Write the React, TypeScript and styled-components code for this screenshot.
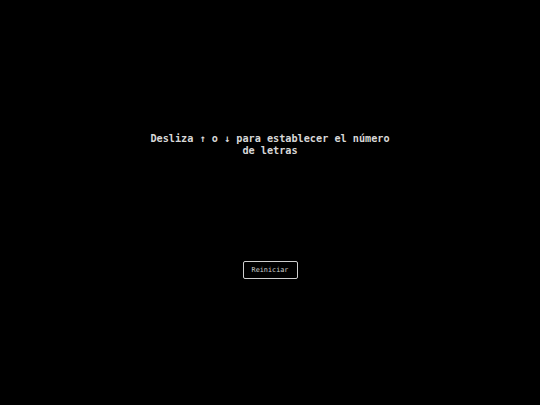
import styled, { createGlobalStyle } from 'styled-components'

const GlobalStyle = createGlobalStyle`
  html, body {
    margin: 0;
    padding: 0;
    background: #000;
  }
`

const Screen = styled.div`
  display: flex;
  flex-direction: column;
  align-items: center;
  height: 100vh;
  background: #000;
  font-family: 'DejaVu Sans Mono', 'Liberation Mono', monospace;
`

const Prompt = styled.div`
  margin-top: 133px;
  width: 252px;
  color: #d8d8d8;
  font-size: 10.2px;
  font-weight: bold;
  line-height: 12px;
  text-align: center;
`

const ResetButton = styled.button`
  margin-top: 104px;
  width: 55px;
  height: 18px;
  padding: 0;
  background: #000;
  color: #d0d0d0;
  border: 1px solid #d0d0d0;
  border-radius: 2px;
  font-family: 'DejaVu Sans Mono', 'Liberation Mono', monospace;
  font-size: 6.8px;
  cursor: pointer;
`

const App = (): JSX.Element => {
  return (
    <>
      <GlobalStyle />
      <Screen>
        <Prompt>Desliza ↑ o ↓ para establecer el número de letras</Prompt>
        <ResetButton>Reiniciar</ResetButton>
      </Screen>
    </>
  )
}

export default App
